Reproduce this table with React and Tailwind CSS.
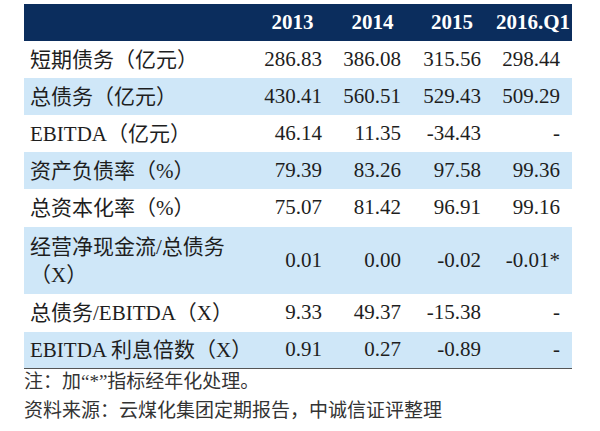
import React from "react";

const rows = [
  { label: "短期债务（亿元）", v: ["286.83", "386.08", "315.56", "298.44"], blue: false, h: "h-[37px]" },
  { label: "总债务（亿元）", v: ["430.41", "560.51", "529.43", "509.29"], blue: true, h: "h-[37px]" },
  { label: "EBITDA（亿元）", v: ["46.14", "11.35", "-34.43", "-"], blue: false, h: "h-[37px]" },
  { label: "资产负债率（%）", v: ["79.39", "83.26", "97.58", "99.36"], blue: true, h: "h-[37px]" },
  { label: "总资本化率（%）", v: ["75.07", "81.42", "96.91", "99.16"], blue: false, h: "h-[38px]" },
  { label: ["经营净现金流/总债务", "（X）"], v: ["0.01", "0.00", "-0.02", "-0.01*"], blue: true, h: "h-[67px]" },
  { label: "总债务/EBITDA（X）", v: ["9.33", "49.37", "-15.38", "-"], blue: false, h: "h-[38px]" },
  { label: "EBITDA 利息倍数（X）", v: ["0.91", "0.27", "-0.89", "-"], blue: true, h: "h-[37px]" },
];

export default function App() {
  return (
    <div
      className="w-[600px] h-[431px] bg-white overflow-hidden text-[#1e1e1e]"
      style={{ fontFamily: '"Liberation Serif", "Noto Sans CJK SC", serif' }}
    >
      <div className="pt-[4px] pl-[24px]">
        <div className="w-[548px]">
          <div className="grid grid-cols-[228px_81px_79px_80px_80px] h-[37px] bg-[#0b2d5d] text-white font-bold text-[21px] items-center">
            <div></div>
            <div className="text-center">2013</div>
            <div className="text-center">2014</div>
            <div className="text-center">2015</div>
            <div className="text-center pl-[2px]">2016.Q1</div>
          </div>
          {rows.map((r, i) => (
            <div
              key={i}
              className={`grid grid-cols-[228px_81px_79px_80px_80px] items-center text-[21px] ${r.h} ${
                r.blue ? "bg-[#cfe7f8]" : "bg-white"
              } ${i === rows.length - 1 ? "border-b border-[#555555]" : ""}`}
            >
              <div className="pl-[6px] leading-[28px]">
                {Array.isArray(r.label) ? (
                  <>
                    <div>{r.label[0]}</div>
                    <div>{r.label[1]}</div>
                  </>
                ) : (
                  r.label
                )}
              </div>
              {r.v.map((x, j) => (
                <div key={j} className={`text-right ${j === 3 ? "pr-[12px]" : "pr-[11px]"}`}>
                  {x}
                </div>
              ))}
            </div>
          ))}
        </div>
        <div className="text-[19px] leading-[29px] text-[#333333] -mt-[2px]">
          <div>注：加“*”指标经年化处理。</div>
          <div>资料来源：云煤化集团定期报告，中诚信证评整理</div>
        </div>
      </div>
    </div>
  );
}
